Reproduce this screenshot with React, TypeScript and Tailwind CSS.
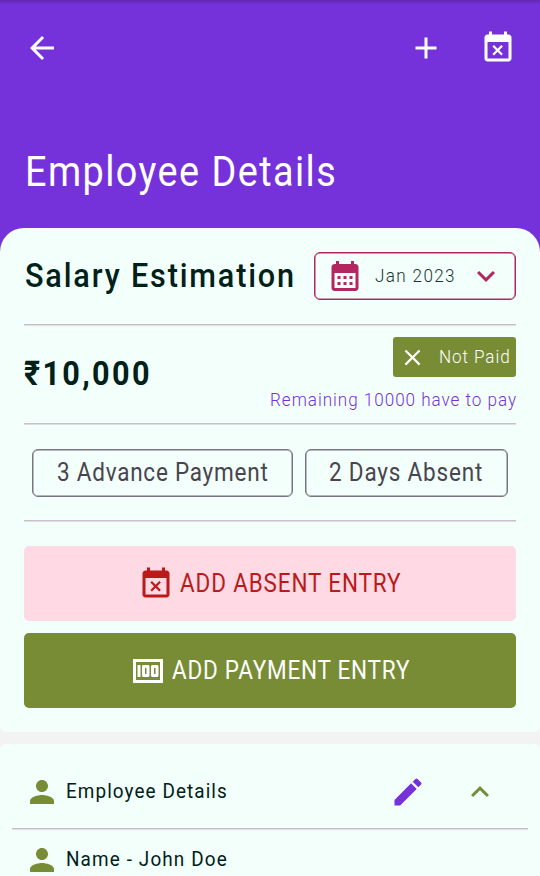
import type { ReactNode } from "react";

const paths = {
  back: "M20 11H7.83l5.59-5.59L12 4l-8 8 8 8 1.41-1.41L7.83 13H20v-2z",
  add: "M19 13h-6v6h-2v-6H5v-2h6V5h2v6h6v2z",
  eventBusy:
    "M9.31 17l2.44-2.44L14.19 17l1.06-1.06-2.44-2.44 2.44-2.44L14.19 10l-2.44 2.44L9.31 10l-1.06 1.06 2.44 2.44-2.44 2.44L9.31 17zM19 3h-1V1h-2v2H8V1H6v2H5c-1.11 0-1.99.9-1.99 2L3 19c0 1.1.89 2 2 2h14c1.1 0 2-.9 2-2V5c0-1.1-.9-2-2-2zm0 16H5V8h14v11z",
  calendar:
    "M19 4h-1V2h-2v2H8V2H6v2H5c-1.11 0-1.99.9-1.99 2L3 20c0 1.1.89 2 2 2h14c1.1 0 2-.9 2-2V6c0-1.1-.9-2-2-2zm0 16H5V10h14v10zM9 14H7v-2h2v2zm4 0h-2v-2h2v2zm4 0h-2v-2h2v2zm-8 4H7v-2h2v2zm4 0h-2v-2h2v2zm4 0h-2v-2h2v2z",
  down: "M7.41 8.59 12 13.17l4.59-4.58L18 10l-6 6-6-6z",
  up: "M12 8l-6 6 1.41 1.41L12 10.83l4.59 4.58L18 14z",
  close:
    "M19 6.41 17.59 5 12 10.59 6.41 5 5 6.41 10.59 12 5 17.59 6.41 19 12 13.41 17.59 19 19 17.59 13.41 12z",
  money:
    "M5 8h2v8H5zM12 8H9c-.55 0-1 .45-1 1v6c0 .55.45 1 1 1h3c.55 0 1-.45 1-1V9c0-.55-.45-1-1-1zm-1 6h-1v-4h1v4zM18 8h-3c-.55 0-1 .45-1 1v6c0 .55.45 1 1 1h3c.55 0 1-.45 1-1V9c0-.55-.45-1-1-1zm-1 6h-1v-4h1v4zM2 4v16h20V4H2zm2 14V6h16v12H4z",
  person:
    "M12 12c2.21 0 4-1.79 4-4s-1.79-4-4-4-4 1.79-4 4 1.79 4 4 4zm0 2c-2.67 0-8 1.34-8 4v2h16v-2c0-2.66-5.33-4-8-4z",
  edit: "M3 17.25V21h3.75L17.81 9.94l-3.75-3.75L3 17.25zM20.71 7.04c.39-.39.39-1.02 0-1.41l-2.34-2.34a.996.996 0 0 0-1.41 0l-1.83 1.83 3.75 3.75 1.83-1.83z",
};

function Icon({ name, className = "size-9" }: { name: keyof typeof paths; className?: string }) {
  return (
    <svg viewBox="0 0 24 24" fill="currentColor" fillRule="evenodd" className={`shrink-0 ${className}`}>
      <path d={paths[name]} />
    </svg>
  );
}

// Condensed label that keeps to one line inside a box of fixed width.
function Label({ className, children }: { className: string; children: ReactNode }) {
  return (
    <span className={`block shrink-0 origin-left scale-x-90 whitespace-nowrap ${className}`}>{children}</span>
  );
}

function Divider() {
  return <div className="h-0.5 shrink-0 border-t border-[#c9c0cc] bg-[#e0dde2]" />;
}

export default function App() {
  return (
    <div className="flex h-[876px] w-[540px] flex-col overflow-hidden bg-[#f4f3f4] font-['Roboto','Noto_Sans',sans-serif] text-[#00201a]">
      <header className="flex h-[252px] shrink-0 flex-col bg-linear-to-b from-[#6029b2] to-[#7632da] to-[5px] text-white">
        <div className="flex h-24 items-center px-6">
          <Icon name="back" />
          <div className="ml-auto flex gap-9">
            <Icon name="add" />
            <Icon name="eventBusy" />
          </div>
        </div>
        <h1 className="mt-12 pl-[25px]">
          <Label className="text-[42px] leading-[56px] tracking-[1.6px]">Employee Details</Label>
        </h1>
      </header>

      <section className="-mt-6 flex h-[504px] shrink-0 flex-col rounded-t-3xl rounded-b-md bg-[#f2fffb] px-6">
        <div className="flex h-24 items-center justify-between">
          <h2 className="w-[280px] pb-[2px] pl-px">
            <Label className="text-[34px] leading-[44px] font-medium tracking-[2.05px]">Salary Estimation</Label>
          </h2>
          <button className="flex h-12 w-[202px] items-center rounded-md border border-[#b3265f] pl-[11.5px] text-left text-[#b3265f] shadow-[inset_0_0_0_0.5px_#b3265f]">
            <Icon name="calendar" />
            <span className="ml-[12px] w-[93px] text-[#1a352f]">
              <Label className="text-[19px] font-light tracking-[1.5px]">Jan 2023</Label>
            </span>
            <Icon name="down" />
          </button>
        </div>
        <Divider />
        <div className="flex h-[97px] justify-between">
          <div className="pt-[23px]">
            <Label className="text-[34px] leading-[48px] font-bold tracking-[2.6px]">₹10,000</Label>
          </div>
          <div className="flex w-[247px] flex-col items-end pt-[11px]">
            <div className="flex h-10 w-[123px] items-center rounded-[3px] bg-[#788c36] pl-[6px] text-white">
              <Icon name="close" className="size-[27px]" />
              <span className="ml-[13px]">
                <Label className="text-[19px] font-light tracking-[1px]">Not Paid</Label>
              </span>
            </div>
            <div className="mt-[9px] w-[247px] pl-px text-[#7632da]">
              <Label className="text-[19px] leading-7 font-light tracking-[1.07px]">Remaining 10000 have to pay</Label>
            </div>
          </div>
        </div>
        <Divider />
        <div className="flex h-[95px] items-center gap-3 px-2 text-[#49454f]">
          <div className="flex h-12 w-[261px] items-center rounded-md border border-[#79747e] pl-6 shadow-[inset_0_0_0_0.5px_#79747e]">
            <Label className="text-[25px] tracking-[0.85px]">3 Advance Payment</Label>
          </div>
          <div className="flex h-12 w-[203px] items-center rounded-md border border-[#79747e] pl-[23px] shadow-[inset_0_0_0_0.5px_#79747e]">
            <Label className="text-[25px] tracking-[0.9px]">2 Days Absent</Label>
          </div>
        </div>
        <Divider />
        <button className="mt-6 flex h-[75px] shrink-0 items-center rounded-[5px] bg-[#ffd9e3] pl-[114px] text-[#ba1a1a]">
          <Icon name="eventBusy" />
          <span className="ml-[6px]">
            <Label className="text-[25px] tracking-[0.95px]">ADD ABSENT ENTRY</Label>
          </span>
        </button>
        <button className="mt-3 flex h-[75px] shrink-0 items-center rounded-[5px] bg-[#788c36] pl-[106px] text-white">
          <Icon name="money" />
          <span className="ml-[6px]">
            <Label className="text-[25px] tracking-[0.85px]">ADD PAYMENT ENTRY</Label>
          </span>
        </button>
      </section>

      <section className="mt-3 flex h-[146px] shrink-0 flex-col rounded-t-md bg-[#f2fffb] px-3">
        <div className="flex h-[84px] shrink-0 items-center pt-3 pr-[30px] pl-3">
          <Icon name="person" className="size-9 text-[#788c36]" />
          <span className="ml-[6px]">
            <Label className="text-[21px] tracking-[1.2px]">Employee Details</Label>
          </span>
          <div className="ml-auto flex gap-9">
            <Icon name="edit" className="size-9 text-[#7632da]" />
            <Icon name="up" className="size-9 text-[#788c36]" />
          </div>
        </div>
        <Divider />
        <div className="flex h-[59px] shrink-0 items-center pl-3">
          <Icon name="person" className="size-9 text-[#788c36]" />
          <span className="ml-[6px]">
            <Label className="text-[21px] tracking-[1.25px]">Name - John Doe</Label>
          </span>
        </div>
      </section>
    </div>
  );
}
